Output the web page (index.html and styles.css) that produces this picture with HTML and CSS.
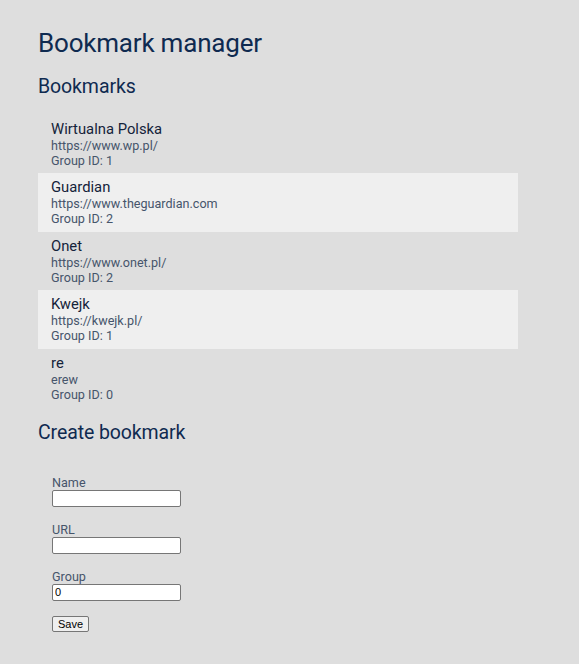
FILE: index.html
```html
<!DOCTYPE html>
<html lang="en">
<head>
<meta charset="utf-8">
<title>Bookmark manager</title>
<link rel="stylesheet" href="styles.css">
</head>
<body>
<main class="app">
  <h1 class="title">Bookmark manager</h1>
  <h2 class="section-title">Bookmarks</h2>
  <ul class="bookmarks">
    <li class="bookmark">
      <div class="bm-name">Wirtualna Polska</div>
      <div class="bm-meta">https://www.wp.pl/</div>
      <div class="bm-meta">Group ID: 1</div>
    </li>
    <li class="bookmark">
      <div class="bm-name">Guardian</div>
      <div class="bm-meta">https://www.theguardian.com</div>
      <div class="bm-meta">Group ID: 2</div>
    </li>
    <li class="bookmark">
      <div class="bm-name">Onet</div>
      <div class="bm-meta">https://www.onet.pl/</div>
      <div class="bm-meta">Group ID: 2</div>
    </li>
    <li class="bookmark">
      <div class="bm-name">Kwejk</div>
      <div class="bm-meta">https://kwejk.pl/</div>
      <div class="bm-meta">Group ID: 1</div>
    </li>
    <li class="bookmark">
      <div class="bm-name">re</div>
      <div class="bm-meta">erew</div>
      <div class="bm-meta">Group ID: 0</div>
    </li>
  </ul>
  <h2 class="section-title">Create bookmark</h2>
  <form class="create-form">
    <label class="field">
      <span class="field-label">Name</span>
      <input class="field-input" type="text">
    </label>
    <label class="field">
      <span class="field-label">URL</span>
      <input class="field-input" type="text">
    </label>
    <label class="field">
      <span class="field-label">Group</span>
      <input class="field-input" type="text" value="0">
    </label>
    <button class="save-btn" type="button">Save</button>
  </form>
</main>
</body>
</html>
```
FILE: styles.css
```css
html, body {
  margin: 0;
  padding: 0;
  background: #dedede;
}
body {
  font-family: Roboto, "Noto Sans", sans-serif;
  font-size: 14px;
  color: #0f2748;
}
.app {
  padding: 26px 38px 20px 38px;
  width: 480px;
}
.title {
  font-size: 26px;
  font-weight: 400;
  letter-spacing: -0.2px;
  margin: 0 0 14px 0;
  line-height: 34px;
  color: #0f2a50;
}
.section-title {
  font-size: 19.5px;
  font-weight: 400;
  letter-spacing: -0.1px;
  margin: 0;
  line-height: 26px;
  color: #0f2a50;
}
.bookmarks {
  list-style: none;
  margin: 15px 0 13px 0;
  padding: 0;
}
.bookmark {
  padding: 5px 13px 0 13px;
  height: 53.4px;
}
.bookmark:nth-child(even) {
  background: #efefef;
}
.bm-name {
  font-size: 14.8px;
  line-height: 18px;
  color: #14233a;
}
.bm-meta {
  font-size: 12.6px;
  line-height: 15px;
  color: #46556b;
}
.create-form {
  display: flex;
  flex-direction: column;
  align-items: flex-start;
  padding: 29px 0 0 14px;
  gap: 15px;
}
.field {
  display: flex;
  flex-direction: column;
  align-items: flex-start;
}
.field-label {
  font-size: 12.6px;
  line-height: 15px;
  color: #46556b;
}
.field-input {
  width: 129px;
  height: 17px;
  box-sizing: border-box;
  margin: 0;
  padding: 1px 2px;
  border: 1px solid #767676;
  border-radius: 2px;
  background: #fff;
  font-family: "Liberation Sans", Arial, sans-serif;
  font-size: 11px;
  color: #000;
}
.save-btn {
  margin-top: 0.5px;
  width: 37px;
  height: 16px;
  padding: 0;
  border: 1px solid #767676;
  border-radius: 2px;
  background: #efefef;
  font-family: "Liberation Sans", Arial, sans-serif;
  font-size: 11px;
  color: #000;
}
```
